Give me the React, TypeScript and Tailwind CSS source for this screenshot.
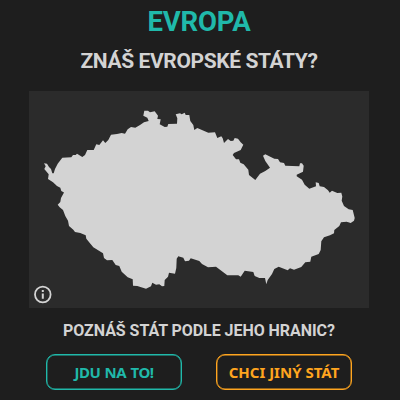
const BORDER =
  '44,163.3 47,163.7 49,167 51,169 52.3,173.3 53.7,173.3 55,169 57.7,163.7 62.3,157.7 71.3,157.3 73,155 75.7,155 77,153.7 82.3,157 85,155 87.3,150 93.7,150 96.3,144.3 99.3,145 103,140.3 105.3,143 108.3,140 111,134.7 117,134 121.7,133 125,133.7 127.7,129.3 131,127 135.3,127.7 140,125 144,122.3 148.7,121 147.3,117.7 143.3,115.7 144.3,110.7 148,110.7 150,112.3 154.7,111.3 158,115.7 157.3,119 160.7,119.3 159.7,124.3 164.7,127 167.3,126.7 168.3,124 177,123.7 177.3,118.3 175.7,114.3 180,113.3 181.7,114.3 184.7,112.7 185.7,115 189.3,115 190.3,121 193.3,125 194.3,130 197.3,128 208.3,132.7 215,132.3 217.3,138 221.3,136.3 222.7,138.3 224,143 228,139 230.7,141 233.3,140.7 234.7,138 238,138.7 240.7,142.3 243.3,144.7 240.7,150 234,153 232.7,155 236,159.3 239,159.3 240.3,162.7 243.7,164.3 248.3,169.7 249,175 255.3,180 260,173.7 265.3,171 270,167.7 265.3,161 263,155.7 265.3,154.3 274.3,158.7 278,159 280,162.3 284,163 285.3,165.7 299.3,166.3 300,163.3 302,163.3 303.7,165.7 303,171.7 296.7,174.7 296.7,176.3 302,179.7 304.7,184.7 309.3,188.7 316,186.3 315.7,182.3 318.7,183 319.7,186.3 324,187 328,190.3 329.7,192.7 332,190.7 337.3,193 341.3,192.7 342.3,196.4 341.7,200.7 344,206 348.7,209.3 352.7,210 354.7,218 354,220.7 350.7,223 346.7,221.7 341,222.3 339.3,226 334.3,230 334,233.3 330,235.3 324,237.3 321.3,241.3 320.7,250 318.7,254 311.3,256.7 310.3,261.7 305.3,262.3 301.3,267 294,269.7 290,268.3 287.7,270.3 278.7,266.7 274.3,269 272,274 267.7,280 266.3,284.3 265,278 259.3,278 254.7,276 253.3,272 244.7,270.7 240.7,276.7 238.3,275.3 227.3,275.3 216,266.7 208,267.3 202,264 199.3,261 190.7,258.3 189,260.7 185,261.3 183.3,257.7 178.3,256.3 176.7,258.7 176.3,268 175,273.7 169,272.7 168,276.7 164.7,280 164.3,286 162,286.3 159.3,284.3 156,284.7 152.3,282.7 151,286.3 146,288.7 137.3,286 133,285.7 132.7,279.3 127.7,277.3 121.7,271.7 119.3,266 115.7,265 112.3,260 107,260.3 104,258 103,253.3 93.3,247.3 86.3,238.7 85.7,235.3 80.3,233 75,232 73.3,229.7 69,226 68,220.7 65.3,216 63,210 59.7,207.3 57.7,204.7 60.3,202 61,198 64,192.5 61.3,191 60.3,187.7 57,186 53,182.3 48,179 48.7,174.3 44.3,169 45.7,166.3'

function InfoIcon() {
  return (
    <svg viewBox="0 0 20 20" className="absolute bottom-1 left-1 size-5 text-[#d3d3d3]" fill="none" stroke="currentColor" strokeWidth="1.8">
      <circle cx="9.8" cy="10.5" r="7.8" />
      <path d="M9.8 9.4v5.3M9.8 6v2" strokeWidth="2" />
    </svg>
  )
}

export default function App() {
  return (
    <main className="flex h-[400px] w-[400px] flex-col items-center overflow-hidden bg-[#1e1e1e] pr-[2px] font-[Roboto,sans-serif] font-bold text-[#d3d3d3]">
      <h1 className="mt-[2px] h-10 text-[27.5px] leading-10 font-bold tracking-[-0.15px] whitespace-nowrap text-[#20b9aa]">EVROPA</h1>
      <h2 className="mt-1 h-[30px] text-[21px] leading-[30px] font-bold tracking-[-0.38px] whitespace-nowrap">ZNÁŠ EVROPSKÉ STÁTY?</h2>
      <div className="relative mt-[15px] h-[217px] w-[340px] shrink-0 bg-[#2b2b2b]">
        <svg viewBox="29 91 340 217" className="block h-full w-full">
          <polygon points={BORDER} fill="#d3d3d3" />
        </svg>
        <InfoIcon />
      </div>
      <p className="mt-[11px] h-6 text-base leading-6 tracking-[-0.05px] whitespace-nowrap">POZNÁŠ STÁT PODLE JEHO HRANIC?</p>
      <div className="mt-[11px] flex gap-[34px] font-['Noto_Sans',sans-serif] text-[15px]">
        <button className="h-9 w-[136px] rounded-[9px] border border-[#20b9aa] font-bold tracking-[-0.5px] whitespace-nowrap text-[#20b9aa] shadow-[inset_0_0_0_0.4px_#20b9aa] [word-spacing:1px]">JDU NA TO!</button>
        <button className="h-9 w-[136px] rounded-[9px] border border-[#ffa51f] font-bold whitespace-nowrap text-[#ffa51f] shadow-[inset_0_0_0_0.4px_#ffa51f]">CHCI JINÝ STÁT</button>
      </div>
    </main>
  )
}
